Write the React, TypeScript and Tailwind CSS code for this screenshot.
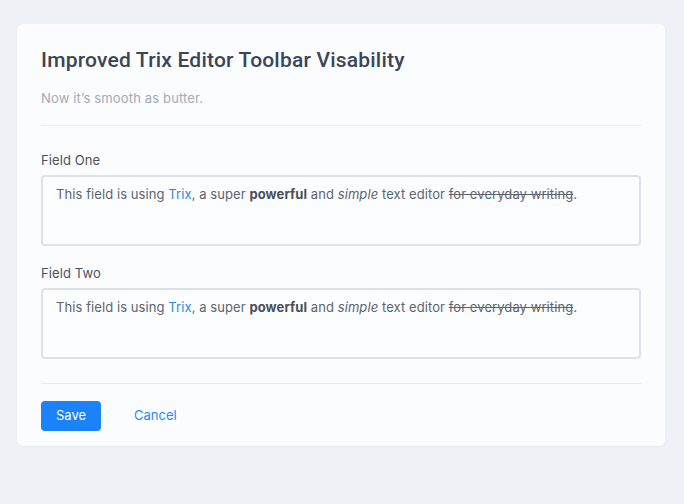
export default function App() {
  const fields = ["Field One", "Field Two"];

  return (
    <div className="min-h-[504px] bg-[#eef1f5] px-[17px] pt-6 pb-14 font-['Inter',sans-serif]">
      <div className="w-[648px] rounded-md bg-[#fbfcfe] px-6 pt-[22px] pb-[15px] shadow-[0_1px_3px_rgba(0,0,0,0.04)]">
        <h1 className="font-['Roboto',sans-serif] text-[21px] leading-[28px] font-medium tracking-[0.2px] text-[#3a4556]">
          Improved Trix Editor Toolbar Visability
        </h1>
        <p className="mt-[14px] text-[13px] leading-5 tracking-[0.15px] text-[#a3aab5]">
          Now it’s smooth as butter.
        </p>

        <div className="mt-[17px] border-t border-[#eceff3]" />

        <div className="mt-[24px] space-y-[17px]">
          {fields.map((label) => (
            <div key={label}>
              <label className="block text-[13px] leading-5 tracking-[0.1px] text-[#4a5261]">{label}</label>
              <div className="mt-[5px] h-[71px] rounded-[4px] border-2 border-[#dde2ea] bg-[#fcfdfe] px-[13px] pt-[7px] text-[13px] leading-5 tracking-[0.08px] text-[#5c6470]">
                This field is using <span className="text-[#2d88f0]">Trix</span>, a super{" "}
                <strong className="font-bold text-[#484f5a]">powerful</strong> and{" "}
                <em className="italic">simple</em> text editor{" "}
                <span className="line-through">for everyday writing</span>.
              </div>
            </div>
          ))}
        </div>

        <div className="mt-[24px] border-t border-[#e6e9ee]" />

        <div className="mt-[17px] flex items-center gap-[33px]">
          <button className="h-[30px] w-[60px] rounded-[4px] bg-[#1b82fa] text-[13px] text-white">
            Save
          </button>
          <button className="text-[13px] text-[#2d88f0]">Cancel</button>
        </div>
      </div>
    </div>
  );
}
